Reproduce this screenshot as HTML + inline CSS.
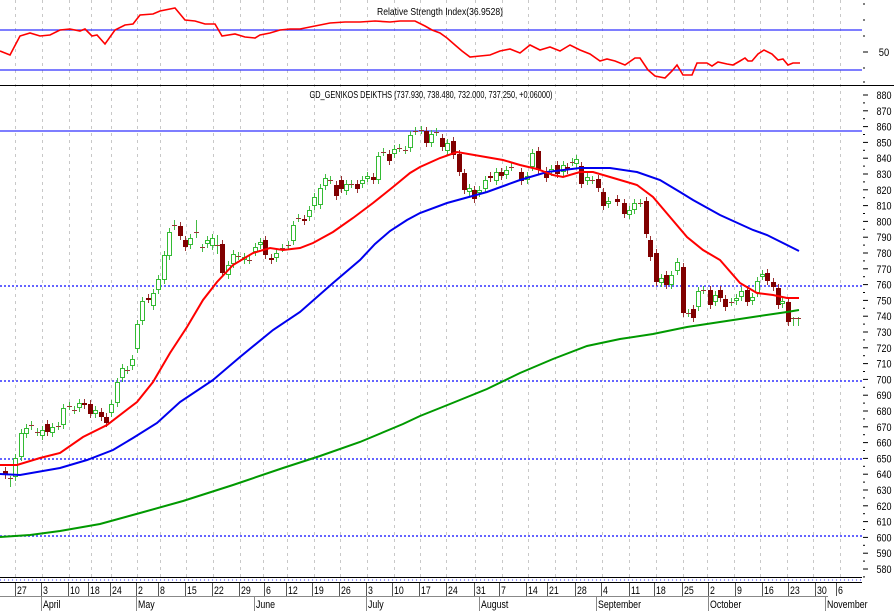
<!DOCTYPE html>
<html><head><meta charset="utf-8">
<style>
html,body{margin:0;padding:0;background:#fff;}
svg{display:block;font-family:"Liberation Sans",sans-serif;}
</style></head>
<body>
<svg id="s" width="894" height="611" viewBox="0 0 894 611" xmlns="http://www.w3.org/2000/svg">
<rect width="894" height="611" fill="#fff"/>
<g id="grid"></g>
<line x1="0" y1="30" x2="862" y2="30" stroke="#3030ff" stroke-width="1.3"/>
<line x1="0" y1="70" x2="862" y2="70" stroke="#3030ff" stroke-width="1.3"/>
<line x1="0" y1="85.5" x2="894" y2="85.5" stroke="#000" stroke-width="1"/>
<text x="440" y="15" font-size="10" text-anchor="middle" textLength="126" lengthAdjust="spacingAndGlyphs">Relative Strength Index(36.9528)</text>
<text x="884" y="56" font-size="11" text-anchor="middle" transform="translate(884 0) scale(0.85 1) translate(-884 0)">50</text>
<polyline fill="none" stroke="#f00" stroke-width="1.6" points="0,51 10,55 20,36 30,33 40,36 50,35 60,30 70,29 80,31 85,29 92,36 97,35 105,44 115,30 125,25 133,24 140,15 153,14 160,11 175,8 185,20 195,21 205,24 215,24 222,36 235,34 245,37 255,38 260,35 270,33 280,30 290,29 300,29 315,26 330,23 345,22 360,22 375,21 390,22 400,21 415,21 425,26 432,30 440,33 447,38 455,45 462,51 470,57 480,56 490,55 500,51 510,49 520,53 530,45 540,50 550,47 560,51 570,45 580,50 590,54 600,61 607,59 615,61 625,65 635,58 640,58 648,70 655,76 665,78 672,71 677,65 683,75 692,75 697,63 707,63 712,66 718,62 727,64 733,65 740,61 745,58 748,61 752,61 758,54 764,50 772,54 778,60 783,59 788,65 793,63 800,63"/>
<text x="431" y="98" font-size="10" text-anchor="middle" textLength="243" lengthAdjust="spacingAndGlyphs">GD_GENIKOS DEIKTHS (737.930, 738.480, 732.000, 737.250, +0.06000)</text>
<line x1="0" y1="131" x2="862" y2="131" stroke="#3030ff" stroke-width="1.3"/>
<g stroke="#3030ff" stroke-width="1.4" stroke-dasharray="2,2">
<line x1="0" y1="286" x2="862" y2="286"/>
<line x1="0" y1="381" x2="862" y2="381"/>
<line x1="0" y1="459" x2="862" y2="459"/>
<line x1="0" y1="536" x2="862" y2="536"/>
</g>
<g id="candles"></g>
<polyline fill="none" stroke="#009900" stroke-width="2" points="0,537 30,535 60,531 100,524 140,513 183,501 233,485 283,468 320,456 360,442 403,424 420,416 450,404 487,389 520,373 553,359 587,346 620,339 653,334 687,327 720,322 753,317 787,312 799,310"/>
<polyline fill="none" stroke="#0000ee" stroke-width="2" points="0,474 20,475 60,468 87,460 113,450 133,438 157,423 180,402 213,380 240,357 273,330 300,312 333,283 360,260 375,244 390,231 407,220 420,213 447,203 487,192 520,180 547,172 580,168 610,168 637,172 660,180 680,192 693,200 720,215 753,230 767,235 787,245 799,251"/>
<polyline fill="none" stroke="#ff0000" stroke-width="2" points="0,465 17,465 40,458 60,453 83,437 107,425 137,402 153,382 170,353 187,327 203,300 217,282 233,265 253,253 270,248 283,250 300,248 313,243 333,232 353,218 373,203 393,187 410,173 420,167 440,158 457,152 503,160 520,165 537,169 553,175 563,177 580,172 593,172 610,177 637,185 653,197 670,217 687,237 703,250 720,260 740,283 757,293 773,295 787,298 799,298"/>
<g id="axis"></g>
<line x1="0" y1="577.5" x2="862" y2="577.5" stroke="#000"/>
<line x1="0" y1="580" x2="862" y2="580" stroke="#3030ff" stroke-dasharray="1,3" stroke-width="1"/>
<line x1="0" y1="582.5" x2="862" y2="582.5" stroke="#000"/>
<line x1="0" y1="596.5" x2="828" y2="596.5" stroke="#888"/>
<g id="dates" font-size="11"></g>
</svg>
<script>
var NS="http://www.w3.org/2000/svg";
function el(p,t,a,txt){var e=document.createElementNS(NS,t);for(var k in a)e.setAttribute(k,a[k]);if(txt!=null)e.textContent=txt;p.appendChild(e);return e;}
var grid=document.getElementById('grid');
var gx=[15,42,69,91,111,137,160,186,213,240,263,287,314,340,367,394,420,446,475,502,528,555,576,602,629,656,683,707,734,760,787,813,840];
gx.forEach(function(x){el(grid,'line',{x1:x+.5,y1:0,x2:x+.5,y2:577,stroke:'#c8c8c8','stroke-dasharray':'3,4','stroke-width':1});});
var ax=document.getElementById('axis');
for(var p=880;p>=580;p-=10){var y=95+(880-p)*1.58;
 el(ax,'line',{x1:863,y1:y,x2:868,y2:y,stroke:'#000'});
 el(ax,'line',{x1:863,y1:y+7.9,x2:865,y2:y+7.9,stroke:'#000'});
 el(ax,'text',{x:884,y:y+4,'font-size':11,'text-anchor':'middle',transform:'translate(884 0) scale(0.82 1) translate(-884 0)'},String(p));}
[4,20,36,52,68,82].forEach(function(y){el(ax,'line',{x1:863,y1:y,x2:y==52?868:865,y2:y,stroke:'#000'});});
var dg=document.getElementById('dates');
var d=[[16,'27'],[42,'3'],[69,'10'],[89,'18'],[111,'24'],[137,'2'],[159,'8'],[186,'15'],[213,'22'],[240,'29'],[265,'6'],[287,'12'],[313,'19'],[340,'26'],[367,'3'],[393,'10'],[420,'17'],[447,'24'],[475,'31'],[500,'7'],[527,'14'],[548,'21'],[576,'28'],[602,'4'],[630,'11'],[655,'18'],[683,'25'],[709,'2'],[736,'9'],[763,'16'],[789,'23'],[816,'30'],[837,'6']];
d.forEach(function(a){el(dg,'line',{x1:a[0]-.5,y1:583,x2:a[0]-.5,y2:596,stroke:'#555'});
 el(dg,'text',{x:a[0]+1,y:594,transform:'translate('+(a[0]+1)+' 0) scale(0.8 1) translate('+(-a[0]-1)+' 0)'},a[1]);});
[[42,'April'],[137,'May'],[255,'June'],[367,'July'],[480,'August'],[597,'September'],[709,'October'],[826,'November']].forEach(function(a){
 el(dg,'line',{x1:a[0]-.5,y1:597,x2:a[0]-.5,y2:611,stroke:'#888'});
 el(dg,'text',{x:a[0]+1,y:608,transform:'translate('+(a[0]+1)+' 0) scale(0.8 1) translate('+(-a[0]-1)+' 0)'},a[1]);});
var C=[[5,'d',471,475],[10,'c',478,478,476,487],[15,'g',458,477],[21,'g',433,457],[26,'g',428,434],[31,'c',425,425,421,430],[37,'c',432,432],[42,'g',430,436],[47,'d',424,432],[52,'g',427,433],[58,'c',426,426],[63,'g',408,425],[69,'c',406,406],[74,'c',410,410],[79,'g',403,408],[84,'d',403,405],[90,'d',404,414],[95,'g',410,414],[101,'d',412,417],[106,'d',417,423],[111,'g',404,413],[117,'g',382,403],[122,'g',368,378],[127,'c',370,370],[132,'g',359,366],[137,'g',324,349],[142,'g',301,321],[148,'d',298,299],[153,'g',293,306],[158,'g',279,290],[164,'g',255,280],[169,'g',232,256],[174,'c',225,225,220,230],[180,'d',226,236],[185,'d',240,247],[190,'g',238,245],[196,'c',232,232,220,238],[202,'c',247,247,244,252],[207,'g',240,244],[212,'g',238,246],[217,'c',245,245,235,254],[222,'d',244,273],[228,'g',265,275],[233,'g',254,264],[238,'c',256,256],[244,'g',257,260],[249,'c',260,260],[255,'g',247,252],[260,'g',242,245],[265,'d',240,255],[271,'d',258,260],[276,'g',253,258],[282,'c',248,248],[288,'c',245,245],[293,'g',225,241],[298,'c',218,218],[304,'d',219,221],[309,'g',210,217],[314,'g',197,206],[320,'g',188,205],[325,'g',178,186],[330,'c',180,180],[336,'d',185,196],[341,'d',180,189],[346,'g',184,191],[351,'c',184,184],[357,'d',184,189],[362,'g',180,184],[367,'g',176,178],[373,'d',177,180],[378,'g',156,180],[383,'c',152,152],[389,'d',154,161],[394,'g',149,154],[399,'c',148,148],[405,'c',150,150],[410,'g',135,148],[415,'c',131,131],[421,'c',130,130],[426,'d',131,143],[431,'g',134,143],[436,'c',132,132],[442,'d',138,147],[447,'g',143,151],[453,'d',141,155],[459,'d',154,172],[464,'d',173,190],[469,'g',188,192],[474,'d',190,199],[479,'g',190,193],[485,'g',180,189],[490,'d',176,178],[496,'g',172,181],[501,'d',172,176],[506,'g',170,175],[511,'c',167,167],[521,'d',172,181],[527,'g',176,180],[532,'g',153,167],[538,'d',151,170],[546,'d',171,178],[551,'g',169,172],[557,'d',165,174],[563,'g',165,172],[567,'d',167,170],[572,'c',162,162],[576,'g',159,164],[581,'d',166,184],[587,'g',177,181],[592,'c',180,180],[598,'d',179,188],[603,'d',192,206],[608,'g',201,204],[617,'d',199,202],[624,'d',203,214],[629,'g',210,215],[634,'g',203,210],[640,'c',203,203],[646,'d',201,234],[650,'d',240,257],[656,'d',253,282],[661,'g',278,283],[666,'d',275,285],[671,'g',275,285],[677,'g',262,271],[683,'d',267,313],[688,'c',313,313],[693,'d',309,318],[698,'g',291,307],[703,'c',290,290],[710,'d',290,305],[715,'g',295,302],[720,'d',290,298],[725,'d',299,307],[731,'c',302,302],[736,'g',298,301],[741,'g',291,297],[747,'d',290,302],[752,'g',297,301],[757,'g',281,293],[762,'g',274,276],[767,'d',273,281],[773,'d',282,287],[778,'d',288,305],[782,'g',301,304],[788,'d',302,322],[793,'c',318,318,317,326],[798,'c',318,318,317,326]];
var cg=document.getElementById('candles');
C.forEach(function(c){var x=c[0],t=c[2],b=c[3];var hi=c[4]||t-4,lo=c[5]||b+4;
 el(cg,'line',{x1:x+.5,y1:hi,x2:x+.5,y2:lo,stroke:c[1]=='d'?'#993333':'#44bb44'});
 if(c[1]=='c'){el(cg,'line',{x1:x-2,y1:t+.5,x2:x+3,y2:t+.5,stroke:'#993333'});}
 else if(c[1]=='d'){el(cg,'rect',{x:x-2,y:t,width:5,height:Math.max(b-t,2),fill:'#800000'});}
 else{el(cg,'rect',{x:x-1.5,y:t+.5,width:4,height:Math.max(b-t-1,2),fill:'#fff',stroke:'#33bb33'});}
});
</script>
</body></html>
